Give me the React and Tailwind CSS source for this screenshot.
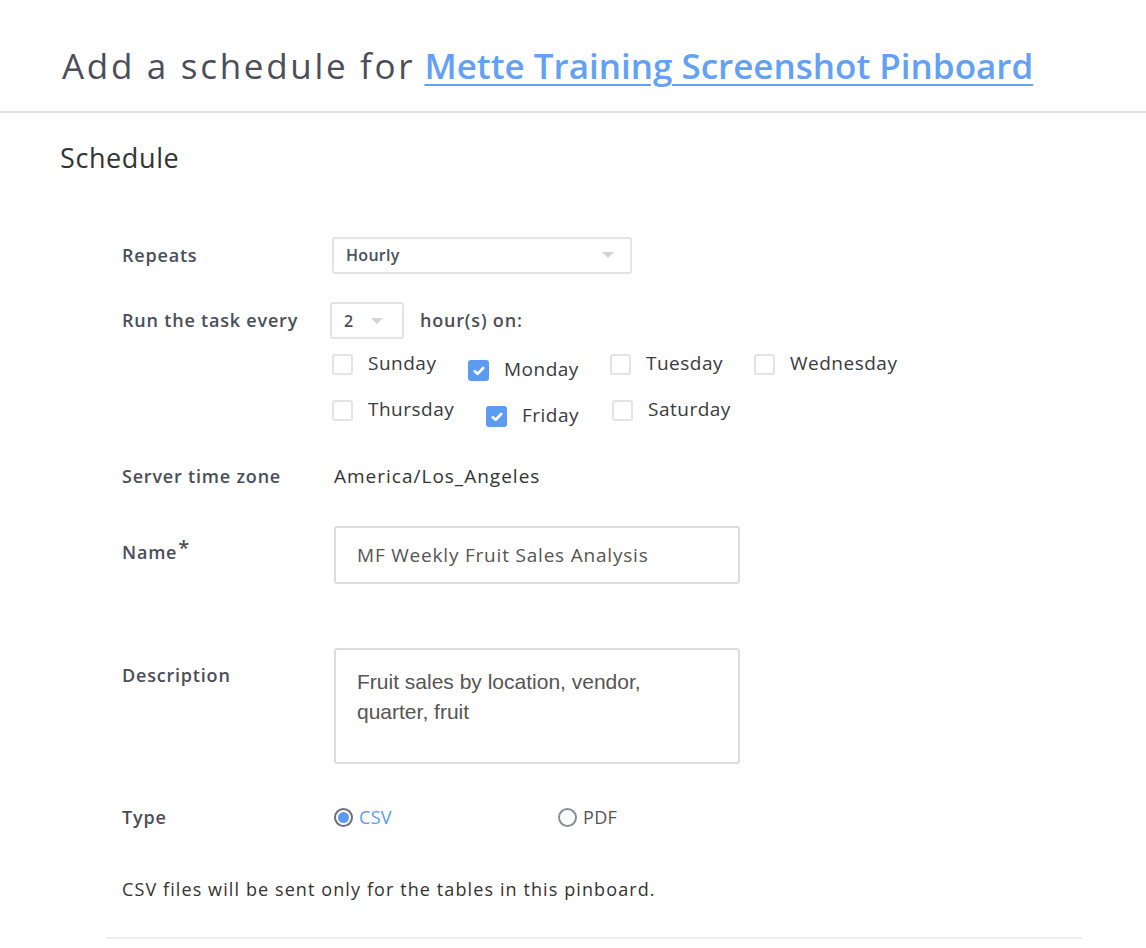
import { useState } from 'react';

const days = [
  [
    { name: 'Sunday', checked: false },
    { name: 'Monday', checked: true },
    { name: 'Tuesday', checked: false },
    { name: 'Wednesday', checked: false },
  ],
  [
    { name: 'Thursday', checked: false },
    { name: 'Friday', checked: true },
    { name: 'Saturday', checked: false },
  ],
];

const Caret = () => (
  <svg width="12" height="6" viewBox="0 0 12 6" className="block">
    <path d="M0 0 L12 0 L6 6 Z" fill="#d3d3d8" />
  </svg>
);

const DayBox = ({ day }) => (
  <label className={`flex items-start ${day.checked ? 'pt-[6px]' : ''}`}>
    {day.checked ? (
      <span className="w-[21px] h-[21px] rounded-[3px] bg-[#5b9cf2] flex items-center justify-center">
        <svg width="12" height="10" viewBox="0 0 12 10">
          <path d="M1.8 5.2 L4.6 7.8 L10.2 2" stroke="#fff" strokeWidth="2.6" fill="none" strokeLinecap="round" strokeLinejoin="round" />
        </svg>
      </span>
    ) : (
      <span className="w-[21px] h-[21px] rounded-[3px] border-2 border-[#e3e3e8] bg-white" />
    )}
    <span className="ml-[15px] -mt-[3px] text-[19px] tracking-[0.5px] text-[#3a3a40] leading-[24px]">{day.name}</span>
  </label>
);

const Label = ({ children, className = '' }) => (
  <div className={`w-[210px] shrink-0 font-semibold text-[18px] tracking-[0.8px] text-[#4b4e59] ${className}`}>{children}</div>
);

export default function App() {
  const [type, setType] = useState('csv');

  return (
    <div className="bg-white min-h-[948px] font-['Open_Sans',sans-serif]">
      <div className="h-[113px] border-b-2 border-[#dedee2] px-[62px] pt-[42px]">
        <h1 className="text-[35px] leading-[48px] text-[#4b4e59] font-normal">
          <span className="tracking-[2.7px]">Add a schedule for</span>{' '}
          <a href="#" className="text-[#62a1f5] font-semibold underline decoration-2 underline-offset-[5px]">
            Mette Training Screenshot Pinboard
          </a>
        </h1>
      </div>

      <div className="px-[60px] pt-[29px]">
        <h2 className="text-[27px] tracking-[0.6px] leading-[32px] text-[#333]">Schedule</h2>

        <div className="pl-[62px] pt-[63px]">
          <div className="flex items-center h-[36px]">
            <Label>Repeats</Label>
            <div className="w-[300px] h-[37px] border-2 border-[#e3e3e8] rounded-[3px] flex items-center justify-between pl-[12px] pr-[16px]">
              <span className="font-semibold text-[16px] tracking-[0.3px] text-[#4b4e59]">Hourly</span>
              <Caret />
            </div>
          </div>

          <div className="flex items-center h-[37px] mt-[29px]">
            <Label>Run the task every</Label>
            <div className="-ml-[2px] w-[74px] h-[37px] border-2 border-[#e3e3e8] rounded-[3px] flex items-center pl-[12px] gap-[18px]">
              <span className="font-semibold text-[16px] text-[#4b4e59]">2</span>
              <Caret />
            </div>
            <span className="ml-[16px] font-semibold text-[18px] tracking-[0.8px] text-[#4b4e59]">hour(s) on:</span>
          </div>

          <div className="ml-[210px] mt-[15px] flex flex-col">
            <div className="flex h-[46px]">
              <div className="w-[136px]"><DayBox day={days[0][0]} /></div>
              <div className="w-[142px]"><DayBox day={days[0][1]} /></div>
              <div className="w-[144px]"><DayBox day={days[0][2]} /></div>
              <div><DayBox day={days[0][3]} /></div>
            </div>
            <div className="flex h-[46px]">
              <div className="w-[154px]"><DayBox day={days[1][0]} /></div>
              <div className="w-[126px]"><DayBox day={days[1][1]} /></div>
              <div><DayBox day={days[1][2]} /></div>
            </div>
          </div>

          <div className="flex items-center mt-[17px] h-[26px]">
            <Label>Server time zone</Label>
            <span className="ml-[2px] text-[19px] tracking-[1px] text-[#333]">America/Los_Angeles</span>
          </div>

          <div className="flex items-start mt-[37px]">
            <Label className="pt-[13px]">
              Name<sup className="text-[20px] ml-[1px] relative -top-[4px]">*</sup>
            </Label>
            <input
              readOnly
              value="MF Weekly Fruit Sales Analysis"
              className="ml-[2px] w-[406px] h-[58px] border-2 border-[#dcdce0] rounded-[3px] px-[21px] text-[19px] tracking-[0.8px] text-[#555] outline-none font-['Open_Sans',sans-serif]"
            />
          </div>

          <div className="flex items-start mt-[64px]">
            <Label className="pt-[14px]">Description</Label>
            <div className="ml-[2px] w-[406px] h-[116px] border-2 border-[#dcdce0] rounded-[3px] px-[21px] pt-[17px] text-[21px] leading-[30px] text-[#555] font-['Liberation_Sans',sans-serif]">
              Fruit sales by location, vendor,<br />quarter, fruit
            </div>
          </div>

          <div className="flex items-center mt-[41px] h-[24px]">
            <Label>Type</Label>
            <div className="ml-[2px] w-[224px] flex items-center cursor-pointer" onClick={() => setType('csv')}>
              <span className={`w-[19px] h-[19px] rounded-full border-2 flex items-center justify-center ${type === 'csv' ? 'border-[#6d6f7a]' : 'border-[#8a8c96]'}`}>
                {type === 'csv' && <span className="w-[11px] h-[11px] rounded-full bg-[#5b9cf2]" />}
              </span>
              <span className={`ml-[6px] text-[18px] tracking-[0.3px] ${type === 'csv' ? 'text-[#5b9cf2]' : 'text-[#555]'}`}>CSV</span>
            </div>
            <div className="flex items-center cursor-pointer" onClick={() => setType('pdf')}>
              <span className={`w-[19px] h-[19px] rounded-full border-2 flex items-center justify-center ${type === 'pdf' ? 'border-[#6d6f7a]' : 'border-[#8a8c96]'}`}>
                {type === 'pdf' && <span className="w-[11px] h-[11px] rounded-full bg-[#5b9cf2]" />}
              </span>
              <span className={`ml-[6px] text-[18px] tracking-[0.3px] ${type === 'pdf' ? 'text-[#5b9cf2]' : 'text-[#555]'}`}>PDF</span>
            </div>
          </div>

          <p className="mt-[48px] text-[18px] tracking-[1.1px] text-[#333] leading-[24px]">
            CSV files will be sent only for the tables in this pinboard.
          </p>
        </div>

        <div className="ml-[46px] mr-[4px] mt-[36px] border-b-2 border-[#eeeeee]" />
      </div>
    </div>
  );
}
